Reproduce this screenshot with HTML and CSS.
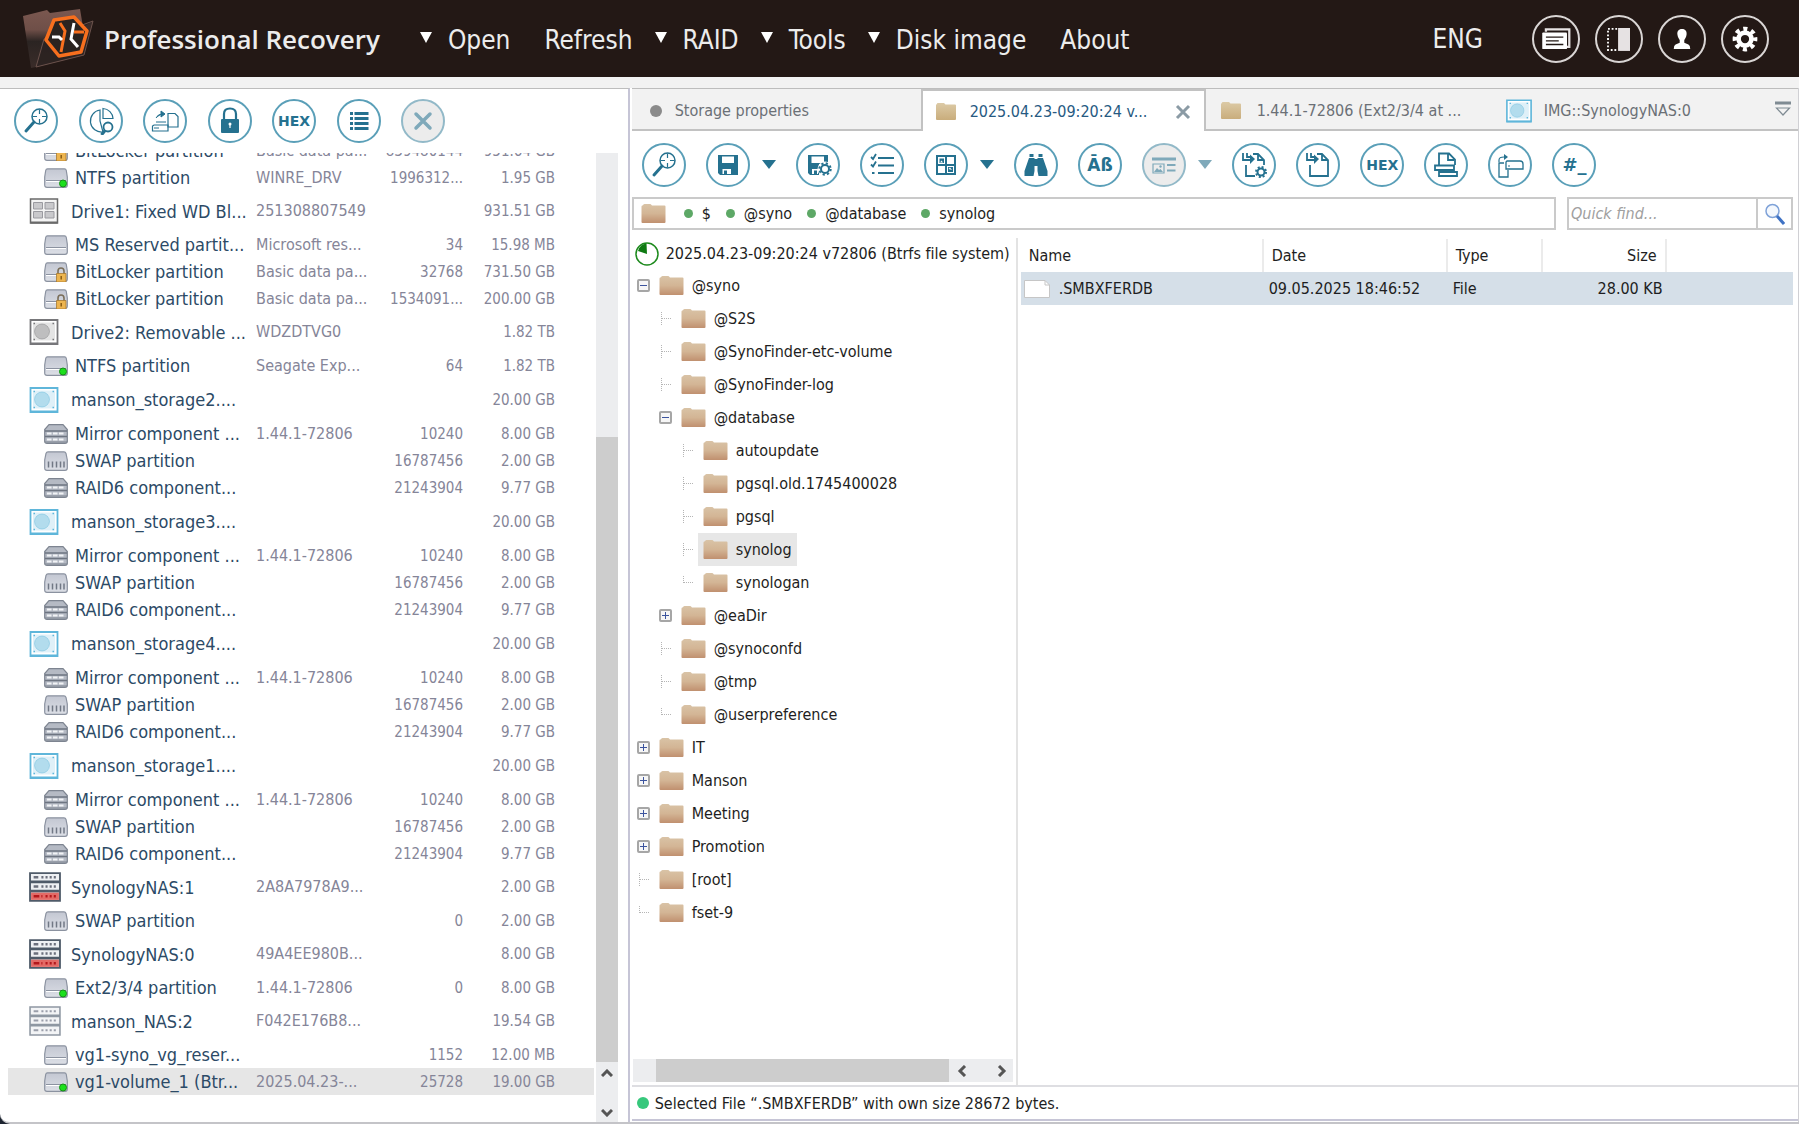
FILE: index.html
```html
<!DOCTYPE html>
<html lang="en">
<head>
    <meta charset="UTF-8">
    <meta name="viewport" content="width=device-width, initial-scale=1.0">
    <title>Professional Recovery</title>
    <link rel="stylesheet" href="styles.css">
</head>
<body>

<!-- Shared icons -->
<svg class="sprite" aria-hidden="true">
    <defs>
        <linearGradient id="folder-fill" x1="0" y1="0" x2="0" y2="1">
            <stop offset="0" stop-color="#d9c3a6"/>
            <stop offset="0.5" stop-color="#d3b595"/>
            <stop offset="1" stop-color="#c0906f"/>
        </linearGradient>
        <linearGradient id="tab-fill" x1="0" y1="0" x2="0" y2="1">
            <stop offset="0" stop-color="#dccaa6"/>
            <stop offset="1" stop-color="#c9ad7c"/>
        </linearGradient>
        <linearGradient id="part-fill" x1="0" y1="0" x2="0" y2="1">
            <stop offset="0" stop-color="#c3c7d2"/>
            <stop offset="1" stop-color="#dcdfe6"/>
        </linearGradient>
        <linearGradient id="logo-fill" x1="0" y1="0" x2="0" y2="1">
            <stop offset="0" stop-color="#7b5850"/>
            <stop offset="0.35" stop-color="#6f4f48"/>
            <stop offset="0.55" stop-color="#2b2422"/>
            <stop offset="1" stop-color="#3a2c29"/>
        </linearGradient>
    </defs>
    <symbol id="i-folder" viewBox="0 0 24 19">
        <path d="M0 2.5Q0 1.5 1 1.5L2 .5Q2.400 0 3 0H8.500Q9.500 0 10 1L10.500 1.500H23Q24 1.500 24 2.500V18Q24 19 23 19H1Q0 19 0 18Z" fill="url(#folder-fill)"/>
    </symbol>
    <symbol id="i-tabfolder" viewBox="0 0 20 17">
        <path d="M0 2L1.500 0H8L9.500 1.500H19Q20 1.500 20 2.500V16Q20 17 19 17H1Q0 17 0 16Z" fill="url(#tab-fill)"/>
    </symbol>
    <symbol id="i-search" viewBox="0 0 28 28">
        <circle cx="17.500" cy="9.500" r="7.500" fill="none" stroke="currentColor" stroke-width="1.500"/>
        <path d="M17.500 2.500v4.500M17.500 12v4.500M10.500 9.500H15M20 9.500h4.500" stroke="currentColor" stroke-width="1.200"/>
        <path d="M12 15L4 24" stroke="currentColor" stroke-width="3" stroke-linecap="round"/>
    </symbol>
    <symbol id="i-pie" viewBox="0 0 28 28">
        <path d="M13 3A11 11 0 1 0 16 25L13 14Z" fill="none" stroke="currentColor" stroke-width="1.200"/>
        <path d="M16 1.500V11.500H26A10.500 10.500 0 0 0 16 1.500Z" fill="none" stroke="currentColor" stroke-width="1.200"/>
        <circle cx="21" cy="20" r="4.500" fill="#fff" stroke="currentColor" stroke-width="1.800"/>
        <path d="M18 23.500L14.500 28" stroke="currentColor" stroke-width="3"/>
    </symbol>
    <symbol id="i-transfer" viewBox="0 0 28 28">
        <path d="M5 11Q7 7 11 7M10 4L14 7L10 10Z" fill="currentColor" stroke="currentColor" stroke-width="1"/>
        <path d="M17 6.500H24L27 9.500V20H17Z" fill="none" stroke="currentColor" stroke-width="1.200"/>
        <path d="M5 15H15M3 18H17V24H1.500V19Z" fill="none" stroke="currentColor" stroke-width="1.200"/>
        <path d="M3 21H8" stroke="currentColor"/>
    </symbol>
    <symbol id="i-lock" viewBox="0 0 28 28">
        <path d="M8 13V7Q8 1.500 14 1.500T20 7V13" fill="none" stroke="currentColor" stroke-width="2.200"/>
        <rect x="5" y="12" width="18" height="14" rx="1" fill="currentColor"/>
        <circle cx="14" cy="17" r="1.500" fill="#fff"/><path d="M14 17V21" stroke="#fff" stroke-width="1.200"/>
    </symbol>
    <symbol id="i-lines" viewBox="0 0 28 28">
        <path d="M5 6.500H8M5 11.500H8M5 16.500H8M5 21.500H8M9.500 6.500H23.500M9.500 11.500H23.500M9.500 16.500H23.500M9.500 21.500H23.500" stroke="currentColor" stroke-width="3"/>
    </symbol>
    <symbol id="i-close" viewBox="0 0 28 28">
        <path d="M7 7L21 21M21 7L7 21" stroke="currentColor" stroke-width="3.500" stroke-linecap="round"/>
    </symbol>
    <symbol id="i-save" viewBox="0 0 28 28">
        <path d="M4 4H24V24H6L4 22Z" fill="currentColor"/>
        <path d="M8 5.500H20V12H8ZM8.500 18H17V23H8.500Z" fill="#fff"/>
        <path d="M10 19.500H13V23H10Z" fill="currentColor"/>
    </symbol>
    <symbol id="i-savegear" viewBox="0 0 28 28">
        <path d="M4 4H24V13H15V24H6L4 22Z" fill="currentColor"/>
        <path d="M7.500 5.500H20V12H7.500ZM8 18H14V23H8Z" fill="#fff"/>
        <path d="M10 19.500H13V23H10Z" fill="currentColor"/>
        <circle cx="21" cy="18" r="7.500" fill="#fff"/>
        <circle cx="21" cy="18" r="4" fill="none" stroke="currentColor" stroke-width="2"/>
        <circle cx="21" cy="18" r="5.700" fill="none" stroke="currentColor" stroke-width="2" stroke-dasharray="2.200 2.280"/>
    </symbol>
    <symbol id="i-checks" viewBox="0 0 28 28">
        <path d="M10 7H26M10 14.500H26M10 22H26" stroke="currentColor" stroke-width="2"/>
        <path d="M3 6L5 8L8 3M3 13.500L5 15.500L8 10.500M4 22H6.500" fill="none" stroke="currentColor" stroke-width="1.800"/>
    </symbol>
    <symbol id="i-grid" viewBox="0 0 28 28">
        <path d="M5 5H23V23H5ZM14 5V23M5 14H23" fill="none" stroke="currentColor" stroke-width="2"/>
        <path d="M7.500 7.500H12V12H7.500ZM16 16H21V21H16Z" fill="currentColor"/>
        <path d="M8 11.500L9.500 9.500L11 11.500ZM16.500 18L18 16.500L20 19Z" fill="#fff"/>
    </symbol>
    <symbol id="i-binoc" viewBox="0 0 28 28">
        <path d="M7.500 3H11.500V6H7.500ZM16.500 3H20.500V6H16.500Z" fill="currentColor"/>
        <path d="M7 7H12.500V20L11.500 25H2.500V20ZM15.500 7H21L25.500 20V25H16.500L15.500 20ZM12.500 8H15.500V15H12.500Z" fill="currentColor"/>
    </symbol>
    <symbol id="i-card" viewBox="0 0 28 28">
        <path d="M2 8H26" stroke="currentColor" stroke-width="3"/>
        <path d="M3 13H14V22H3Z" fill="none" stroke="currentColor" stroke-width="1.200"/>
        <path d="M4 21L7 17L9 19L10.500 18L13 21Z" fill="currentColor"/>
        <circle cx="10.500" cy="15.500" r="1.200" fill="currentColor"/>
        <path d="M17 14H25.500M17 19.500H25.500" stroke="currentColor" stroke-width="2"/>
    </symbol>
    <symbol id="i-import" viewBox="0 0 28 28">
        <path d="M6 14V25H24V9L18 3H13M18 3V9H24" fill="none" stroke="currentColor" stroke-width="1.800"/>
        <path d="M3 2V9H11M7 2V6H11" fill="none" stroke="currentColor" stroke-width="1.800"/>
        <path d="M10 3.500L15 8L10 13Z" fill="currentColor"/>
    </symbol>
    <symbol id="i-importgear" viewBox="0 0 28 28">
        <path d="M6 14V25H15M24 14V9L18 3H13M18 3V9H24" fill="none" stroke="currentColor" stroke-width="1.800"/>
        <path d="M3 2V9H11M7 2V6H11" fill="none" stroke="currentColor" stroke-width="1.800"/>
        <path d="M10 3.500L15 8L10 13Z" fill="currentColor"/>
        <circle cx="21" cy="21" r="3.500" fill="none" stroke="currentColor" stroke-width="2"/>
        <circle cx="21" cy="21" r="5" fill="none" stroke="currentColor" stroke-width="2" stroke-dasharray="2 1.927"/>
    </symbol>
    <symbol id="i-print" viewBox="0 0 28 28">
        <path d="M7 14V2.500H17L23 8.500V14M16 3V9H22" fill="none" stroke="currentColor" stroke-width="1.800"/>
        <path d="M3 14.500H22V19H3ZM7 21H25V25H7Z" fill="none" stroke="currentColor" stroke-width="1.800"/>
    </symbol>
    <symbol id="i-drivecopy" viewBox="0 0 28 28">
        <path d="M3 11V9Q3 6 8 6" fill="none" stroke="currentColor" stroke-width="1.200"/>
        <path d="M8 3L12 6L8 9Z" fill="currentColor"/>
        <path d="M11 10H24Q27 10 27 13V18H10V11ZM8 12H3V26H12V19" fill="none" stroke="currentColor" stroke-width="1.300"/>
        <path d="M12 15H14" stroke="currentColor"/>
    </symbol>
    <symbol id="i-hdd" viewBox="0 0 29 26">
        <path d="M1 1H28V25H1Z" fill="#fff" stroke="currentColor" stroke-width="1.800"/>
        <path d="M3.500 3.500H25.500V21.500H3.500Z" fill="currentColor" fill-opacity="0.200"/>
        <circle cx="12.500" cy="12.500" r="7.500" fill="currentColor" fill-opacity="0.350" stroke="currentColor" stroke-opacity="0.400"/>
        <path d="M4 4.500H5.500M23 4.500H24.500M4 20.500H5.500M23 20.500H24.500" stroke="currentColor" stroke-width="1.500"/>
        <path d="M1 24.500H28" stroke="currentColor" stroke-width="2"/>
    </symbol>
    <symbol id="i-fixed" viewBox="0 0 29 26">
        <path d="M1 1H28V25H1Z" fill="#f4f4f4" stroke="#6a6a6a" stroke-width="1.500"/>
        <path d="M4 4.500H13V11H4ZM15.500 4.500H24.500V11H15.500ZM4 13.500H13V20H4ZM15.500 13.500H24.500V20H15.500Z" fill="#c9c9cc" stroke="#9a9aa0"/>
        <path d="M1 24.500H28" stroke="#6a6a6a" stroke-width="2"/>
    </symbol>
    <symbol id="i-part" viewBox="0 0 24 20">
        <path d="M3.500 .8H20.500Q22 .8 22.300 2.500L23.300 9V17Q23.300 19.300 21 19.300H3Q.7 19.300 .7 17V9L1.700 2.500Q2 .8 3.500 .8Z" fill="url(#part-fill)" stroke="#8b92a0" stroke-width="1.200"/>
        <path d="M2 12.500H22" stroke="#8b92a0"/><path d="M2 13.500H22" stroke="#fff"/>
    </symbol>
    <symbol id="i-ntfs" viewBox="0 0 24 20">
        <use href="#i-part"/>
        <circle cx="19" cy="15.500" r="3.500" fill="#1ce01c" stroke="#169016" stroke-width="1"/>
    </symbol>
    <symbol id="i-bitlocker" viewBox="0 0 24 20">
        <use href="#i-part"/>
        <path d="M14 12V9Q14 6 17 6T20 9V12" fill="none" stroke="#7b6f5a" stroke-width="1.600"/>
        <path d="M12.500 11.500H22V20H12.500Z" fill="#edb550" stroke="#a87a30" stroke-width=".8"/>
        <path d="M17.200 14V17.500" stroke="#8a5c14" stroke-width="1.500"/>
    </symbol>
    <symbol id="i-swap" viewBox="0 0 24 20">
        <path d="M4 .8H20Q21.500 .8 22 2.500L23.300 9V17Q23.300 19.300 21 19.300H3Q.7 19.300 .7 17V9L2 2.500Q2.500 .8 4 .8Z" fill="url(#part-fill)" stroke="#8b92a0" stroke-width="1.200"/>
        <path d="M4.500 10.500V16.500M8.500 10.500V16.500M12.500 10.500V16.500M16.500 10.500V16.500M20 10.500V16.500" stroke="#717885" stroke-width="1.500"/>
    </symbol>
    <symbol id="i-raid" viewBox="0 0 24 20">
        <path d="M5 .7H19L23.300 5.500V17.500Q23.300 19.300 21 19.300H3Q.7 19.300 .7 17.500V5.500Z" fill="#b5bac4" stroke="#7d8490" stroke-width="1.200"/>
        <path d="M1 7H23M1 12.500H23" stroke="#6e7581" stroke-width="1.300"/>
        <path d="M3 9.500H21M3 15.500H21" stroke="#f2f3f6" stroke-width="2" stroke-dasharray="4.500 1.500"/>
        <path d="M1 18H23" stroke="#7d8490"/>
    </symbol>
    <symbol id="i-nas" viewBox="0 0 31 29">
        <path d="M1 1H30V9H1ZM1 10H30V18H1ZM1 19H30V28H1Z" fill="#f3f4f6" stroke="#8e97a2" stroke-width="1.500"/>
        <path d="M4.500 5H9M12 5H14M16 5H18M20 5H22M24 5H26M4.500 14H9M12 14H14M16 14H18M20 14H22M24 14H26M4.500 23.500H9M12 23.500H14M16 23.500H18M20 23.500H22M24 23.500H26" stroke="#9a9eaa" stroke-width="2"/>
    </symbol>
    <symbol id="i-nasred" viewBox="0 0 31 29">
        <path d="M1 1H30V9H1ZM1 10H30V18H1ZM1 19H30V28H1Z" fill="#eef0f3" stroke="#4f5b69" stroke-width="1.800"/>
        <path d="M4.500 5H9M12 5H14M16 5H18M20 5H22M24 5H26M4.500 14H9M12 14H14M16 14H18M20 14H22M24 14H26" stroke="#6b6f7c" stroke-width="2.500"/>
        <path d="M2 20H29V27H2Z" fill="#e36a66"/>
        <path d="M4.500 23.500H10M12 23.500H13M16 23.500H18M20 23.500H22M24 23.500H26" stroke="#b3181c" stroke-width="2.500"/>
    </symbol>
</svg>

<header class="topbar">
    <svg class="logo" viewBox="0 0 72 60" aria-hidden="true">
        <path d="M1 7L25 1L28 4L58 0L61 18L71 12L62 46L14 58L9 59Z" fill="url(#logo-fill)"/>
        <path d="M14 58L22 30L71 12L62 46Z" fill="#2b2220" fill-opacity="0.800" stroke="#6b524c"/>
        <path d="M32 11L52 8L65 22L59 43L37 47L24 31Z" fill="#2a2320" stroke="#f76f1e" stroke-width="3.500" stroke-linejoin="round"/>
        <path d="M38 14L43 22L39 43M52 23H62" fill="none" stroke="#f76f1e" stroke-width="3"/>
        <path d="M52 14L49 30L56 38M30 28H37L40 31" fill="none" stroke="#fff" stroke-width="3"/>
    </svg>
    <strong class="brand">Professional Recovery</strong>
    <nav class="menu">
        <a href="#" class="has-sub">Open</a>
        <a href="#">Refresh</a>
        <a href="#" class="has-sub">RAID</a>
        <a href="#" class="has-sub">Tools</a>
        <a href="#" class="has-sub">Disk image</a>
        <a href="#">About</a>
    </nav>
    <button class="lang">ENG</button>
    <div class="top-actions">
        <button class="top-btn" aria-label="News">
            <svg viewBox="0 0 48 48"><path d="M13 16V13.500H38.500V32.500H36" fill="none" stroke="#e8e4e4" stroke-width="2.500"/><rect x="9" y="17" width="27" height="18" rx="1" fill="#fff"/><path d="M13 22H32M13 26H27M13 30H32" stroke="#231815" stroke-width="1.500"/></svg>
        </button>
        <button class="top-btn" aria-label="Panels">
            <svg viewBox="0 0 48 48"><path d="M22 13H12V36H22" fill="none" stroke="#fff" stroke-width="2" stroke-dasharray="2 2"/><rect x="23" y="12" width="13" height="25" fill="#e6e2e3"/></svg>
        </button>
        <button class="top-btn" aria-label="Account">
            <svg viewBox="0 0 48 48"><path d="M24 13C28 13 29.500 16 29 19C28.700 22 27 24 26.500 25V28L31 30Q33 31 33 35H15Q15 31 17 30L21.500 28V25C21 24 19.300 22 19 19C18.500 16 20 13 24 13Z" fill="#fff"/></svg>
        </button>
        <button class="top-btn" aria-label="Settings">
            <svg viewBox="0 0 48 48"><circle cx="24" cy="24" r="7" fill="none" stroke="#fff" stroke-width="5"/><circle cx="24" cy="24" r="11" fill="none" stroke="#fff" stroke-width="5" stroke-dasharray="4.400 4.240" stroke-dashoffset="2.200"/></svg>
        </button>
    </div>
</header>

<main class="workspace">
    <section class="storages">
        <div class="toolbar storages-bar">
            <button class="tool" aria-label="Scan"><svg><use href="#i-search"/></svg></button>
            <button class="tool" aria-label="Find partitions"><svg><use href="#i-pie"/></svg></button>
            <button class="tool" aria-label="Save image"><svg><use href="#i-transfer"/></svg></button>
            <button class="tool" aria-label="Decrypt"><svg><use href="#i-lock"/></svg></button>
            <button class="tool hex">HEX</button>
            <button class="tool" aria-label="Properties"><svg><use href="#i-lines"/></svg></button>
            <button class="tool disabled" aria-label="Close storage" disabled><svg><use href="#i-close"/></svg></button>
        </div>
        <div class="drive-scroll">
            <div class="drive-view">
                <table class="drives">
                    <colgroup><col class="c-name"><col class="c-label"><col class="c-start"><col class="c-size"><col></colgroup>
                    <tbody id="drives"></tbody>
                </table>
            </div>
            <div class="vscroll">
                <div class="vthumb"></div>
                <svg viewBox="0 0 12 8"><path d="M1 7L6 2L11 7" fill="none" stroke="#555" stroke-width="3"/></svg>
                <svg viewBox="0 0 12 8"><path d="M1 1L6 6L11 1" fill="none" stroke="#555" stroke-width="3"/></svg>
            </div>
        </div>
    </section>

    <section class="explorer">
        <div class="tabs">
            <button class="tab tab-props"><span class="dot"></span>Storage properties</button>
            <button class="tab tab-active"><svg class="tab-folder"><use href="#i-tabfolder"/></svg>2025.04.23-09:20:24 v...
                <svg class="tab-close" viewBox="0 0 16 16"><path d="M2 2L14 14M14 2L2 14" stroke="#8b9ba5" stroke-width="3"/></svg>
            </button>
            <button class="tab tab-ext"><svg class="tab-folder"><use href="#i-tabfolder"/></svg>1.44.1-72806 (Ext2/3/4 at ...</button>
            <button class="tab tab-img"><svg class="tab-hdd"><use href="#i-hdd"/></svg>IMG::SynologyNAS:0</button>
            <button class="tab-more" aria-label="More tabs"><svg viewBox="0 0 16 16"><path d="M0 2H16" stroke="#7f8b93" stroke-width="3"/><path d="M1.500 7H14.500L8 14Z" fill="none" stroke="#7f8b93" stroke-width="1.200"/></svg></button>
        </div>

        <div class="toolbar explorer-bar">
            <button class="tool" aria-label="Search"><svg><use href="#i-search"/></svg></button>
            <div class="split"><button class="tool" aria-label="Save"><svg><use href="#i-save"/></svg></button><button class="caret" aria-label="Save options"></button></div>
            <button class="tool" aria-label="Save settings"><svg><use href="#i-savegear"/></svg></button>
            <button class="tool" aria-label="Select"><svg><use href="#i-checks"/></svg></button>
            <div class="split"><button class="tool" aria-label="View"><svg><use href="#i-grid"/></svg></button><button class="caret" aria-label="View options"></button></div>
            <button class="tool" aria-label="Find"><svg><use href="#i-binoc"/></svg></button>
            <button class="tool abc">Āß</button>
            <div class="split"><button class="tool disabled" aria-label="Preview" disabled><svg><use href="#i-card"/></svg></button><button class="caret faded" aria-label="Preview options"></button></div>
            <button class="tool" aria-label="Import with options"><svg><use href="#i-importgear"/></svg></button>
            <button class="tool" aria-label="Import"><svg><use href="#i-import"/></svg></button>
            <button class="tool hex">HEX</button>
            <button class="tool" aria-label="Report"><svg><use href="#i-print"/></svg></button>
            <button class="tool" aria-label="Copy to drive"><svg><use href="#i-drivecopy"/></svg></button>
            <button class="tool hash">#_</button>
        </div>

        <div class="address">
            <nav class="crumbs">
                <svg class="folder"><use href="#i-folder"/></svg>
                <a href="#">$</a>
                <a href="#">@syno</a>
                <a href="#">@database</a>
                <a href="#">synolog</a>
            </nav>
            <form class="quick">
                <input type="text" placeholder="Quick find..." aria-label="Quick find">
                <button type="button" aria-label="Find">
                    <svg viewBox="0 0 20 22"><circle cx="7.500" cy="8" r="6.500" fill="#f4f8fd" stroke="#7fa2d8" stroke-width="1.500"/><path d="M12 13L19 21" stroke="#3f72c4" stroke-width="3"/></svg>
                </button>
            </form>
        </div>

        <div class="panes">
            <div class="tree-pane">
                <div class="tree-root">
                    <svg viewBox="0 0 24 24"><circle cx="12" cy="12" r="11" fill="#fff" stroke="#1d8a1d" stroke-width="1.500"/><path d="M12 12L3 9Q5 2 11.500 1.500Z" fill="#0f7a12"/></svg>
                    <span>2025.04.23-09:20:24 v72806 (Btrfs file system)</span>
                </div>
                <ul class="tree" id="tree"></ul>
                <div class="hscroll">
                    <div class="hthumb"></div>
                    <svg viewBox="0 0 10 12"><path d="M8 1L3 6L8 11" fill="none" stroke="#555" stroke-width="3"/></svg>
                    <svg viewBox="0 0 10 12"><path d="M2 1L7 6L2 11" fill="none" stroke="#555" stroke-width="3"/></svg>
                </div>
            </div>
            <div class="files-pane">
                <table class="files">
                    <colgroup><col class="f-name"><col class="f-date"><col class="f-type"><col class="f-size"><col></colgroup>
                    <thead>
                        <tr><th>Name</th><th>Date</th><th>Type</th><th class="num">Size</th><th></th></tr>
                    </thead>
                    <tbody>
                        <tr>
                            <td><span class="file"><svg viewBox="0 0 26 18"><path d="M.5 .5H21L25.500 5V17.500H.5Z" fill="#fff" stroke="#c6c6c6"/><path d="M21 .5V5H25.500" fill="none" stroke="#c6c6c6"/></svg>.SMBXFERDB</span></td>
                            <td>09.05.2025 18:46:52</td>
                            <td>File</td>
                            <td class="num">28.00 KB</td>
                            <td></td>
                        </tr>
                    </tbody>
                </table>
            </div>
        </div>

        <footer class="status"><span class="status-dot"></span>Selected File “.SMBXFERDB” with own size 28672 bytes.</footer>
    </section>
</main>

<script src="script.js"></script>
</body>
</html>
```
FILE: styles.css
```css
* {
    box-sizing: border-box;
}

body {
    margin: 0;
    height: 100vh;
    display: flex;
    flex-direction: column;
    overflow: hidden;
    background: #1d2430;
    color: #1e1e22;
    font-family: "DejaVu Sans Condensed", Tahoma, "Noto Sans", sans-serif;
    font-size: 16px;
    font-variant-ligatures: none;
}

button {
    font: inherit;
    color: inherit;
    background: none;
    border: none;
    padding: 0;
}

a {
    color: inherit;
    text-decoration: none;
}

svg {
    display: block;
    flex: none;
}

table {
    border-collapse: collapse;
    table-layout: fixed;
    width: 100%;
}

.sprite {
    position: absolute;
    width: 0;
    height: 0;
}

/* Top bar */
.topbar {
    display: flex;
    align-items: center;
    flex: none;
    height: 77px;
    padding: 0 30px 0 22px;
    background: #231815;
    color: #ececec;
}

.logo {
    width: 72px;
    height: 60px;
}

.brand {
    margin-left: 10px;
    font-family: "Open Sans", sans-serif;
    font-size: 26px;
    font-weight: 600;
    white-space: nowrap;
}

.menu {
    display: flex;
    gap: 34px;
    margin-left: 68px;
    padding-top: 2px;
    font-size: 26px;
    white-space: nowrap;
}

.menu .has-sub {
    margin-left: -12px;
}

.menu .has-sub:first-child {
    margin-left: -28px;
}

.has-sub::before {
    content: "";
    display: inline-block;
    margin-right: 16px;
    vertical-align: 6px;
    border: 6px solid transparent;
    border-top: 11px solid #fff;
    border-bottom: 0;
}

.lang {
    margin-left: auto;
    font-size: 26px;
}

.top-actions {
    display: flex;
    gap: 15px;
    margin-left: 49px;
}

.top-btn {
    width: 48px;
    height: 48px;
    border: 2px solid #d9d5d4;
    border-radius: 50%;
}

.top-btn svg {
    width: 44px;
    height: 44px;
}

/* Workspace */
.workspace {
    flex: 1;
    display: flex;
    min-height: 0;
    border-top: 11px solid #f2f2f2;
    border-bottom: 2px solid #c4c4c8;
    border-bottom-left-radius: 10px;
    background: #fff;
}

.storages {
    display: flex;
    flex-direction: column;
    width: 35%;
    border-top: 1px solid #bdbdbd;
    border-right: 2px solid #c6c5d6;
}

.toolbar {
    display: flex;
    justify-content: space-between;
    align-items: center;
    flex: none;
}

.storages-bar {
    width: 431px;
    height: 64px;
    margin-left: 14px;
}

.tool {
    display: flex;
    align-items: center;
    justify-content: center;
    width: 44px;
    height: 44px;
    border: 2px solid #5a9fb8;
    border-radius: 50%;
    color: #25718f;
    font-family: "DejaVu Sans", sans-serif;
    font-weight: bold;
}

.tool svg {
    width: 28px;
    height: 28px;
}

.disabled {
    background: #ececec;
    border-color: #92b9c8;
    color: #7fa9ba;
}

.hex {
    font-size: 14px;
}

.abc {
    font-size: 17px;
}

.hash {
    font-size: 18px;
}

.drive-scroll {
    display: flex;
    flex: 1;
    min-height: 0;
}

.drive-view {
    flex: 1;
    overflow: hidden;
    padding: 0 2px 0 8px;
}

.drives {
    margin-top: -16px;
    color: #858598;
}

.c-name { width: 248px; }
.c-label { width: 123px; }
.c-start { width: 84px; }
.c-size { width: 92px; }

.drives td {
    height: 27px;
    padding: 0;
    line-height: 20px;
    white-space: nowrap;
}

.drives .drive td {
    height: 40px;
}

.drives .image td {
    height: 41px;
}

.drives .selected {
    background: #e6e6e6;
}

.drives .num {
    font-size: 15px;
    text-align: right;
}

.name {
    display: flex;
    align-items: center;
    gap: 7px;
    padding-left: 36px;
    color: #2c4a66;
    font-size: 18px;
    line-height: 27px;
}

.name svg {
    width: 24px;
    height: 20px;
}

.drive .name {
    gap: 12px;
    padding-left: 21px;
}

.drive .name svg {
    width: 30px;
    height: 26px;
    color: #77777a;
}

.image .name svg {
    color: #5fb6da;
}

.nas .name {
    gap: 10px;
}

.drive.nas .name svg {
    width: 32px;
    height: 30px;
}

.vscroll {
    display: flex;
    flex-direction: column;
    align-items: center;
    width: 22px;
    margin-right: 10px;
    padding-top: 284px;
    background: #ecedef;
}

.vthumb {
    flex: 1;
    width: 100%;
    background: #cdcdcd;
}

.vscroll svg {
    width: 12px;
    height: 8px;
    margin-top: 7px;
}

.vscroll svg:last-child {
    margin: 32px 0 5px;
}

/* Explorer */
.explorer {
    flex: 1;
    display: flex;
    flex-direction: column;
    min-width: 0;
    padding-left: 2px;
    border-right: 1px solid #d0d0d4;
}

.tabs {
    display: flex;
    flex: none;
    height: 43px;
    border-top: 1px solid #bdbdbd;
    background: #f2f2f2;
    color: #6b7076;
    white-space: nowrap;
}

.tab {
    display: flex;
    align-items: center;
    gap: 14px;
    padding-top: 3px;
    border-bottom: 2px solid #c2c2c2;
}

.tab svg.tab-folder {
    width: 20px;
    height: 17px;
}

.tab-props {
    gap: 13px;
    width: 289px;
    padding-left: 18px;
}

.dot {
    width: 12px;
    height: 12px;
    border-radius: 50%;
    background: #8b8b8b;
}

.tab-active {
    width: 285px;
    padding: 1px 13px 0;
    border: 2px solid #c2c2c2;
    border-bottom: none;
    background: #fff;
    color: #275a82;
}

.tab-close {
    width: 16px;
    height: 16px;
    margin-left: auto;
}

.tab-ext {
    width: 285px;
    gap: 16px;
    padding-left: 15px;
}

.tab-img {
    flex: 1;
    gap: 12px;
    padding-left: 15px;
}

.tab-hdd {
    width: 26px;
    height: 24px;
    color: #5fb6da;
}

.tab-more {
    padding-right: 7px;
    border-bottom: 2px solid #c2c2c2;
}

.tab-more svg {
    width: 16px;
    height: 16px;
}

.explorer-bar {
    width: 955px;
    height: 66px;
    margin-left: 10px;
    padding-top: 1px;
}

.split {
    display: flex;
    align-items: center;
}

.caret {
    margin-left: 12px;
    border: 7px solid transparent;
    border-top: 9px solid #25718f;
    border-bottom: 0;
}

.faded {
    border-top-color: #7fa9ba;
}

.address {
    display: flex;
    flex: none;
    gap: 11px;
    height: 33px;
    padding-right: 5px;
}

.crumbs {
    flex: 1;
    display: flex;
    align-items: center;
    gap: 15px;
    padding-left: 7px;
    border: 2px solid #cacaca;
}

.crumbs .folder {
    margin-right: 3px;
}

.crumbs a::before {
    content: "";
    display: inline-block;
    width: 9px;
    height: 9px;
    margin-right: 9px;
    border-radius: 50%;
    background: #5da866;
    vertical-align: 1px;
}

.folder {
    width: 25px;
    height: 19px;
}

.quick {
    display: flex;
    width: 226px;
    border: 2px solid #cacaca;
}

.quick input {
    flex: 1;
    min-width: 0;
    padding: 0 2px;
    border: none;
    font: italic 16px "DejaVu Sans Condensed", Tahoma, sans-serif;
}

.quick input::placeholder {
    color: #a0a0a0;
}

.quick button {
    width: 35px;
    padding-left: 7px;
    border-left: 2px solid #cacaca;
}

.quick svg {
    width: 20px;
    height: 22px;
}

.panes {
    flex: 1;
    display: flex;
    min-height: 0;
    margin-top: 8px;
}

.tree-pane {
    display: flex;
    flex-direction: column;
    width: 386px;
    border-right: 2px solid #e3e3e3;
}

.tree-root {
    display: flex;
    align-items: center;
    gap: 7px;
    height: 31px;
    padding-left: 3px;
    white-space: nowrap;
}

.tree-root svg {
    width: 24px;
    height: 24px;
}

.tree {
    flex: 1;
    margin: 0;
    padding: 0 0 0 5px;
    list-style: none;
}

.tree li {
    display: flex;
    align-items: center;
    height: 33px;
}

.tree .level-2 { padding-left: 22px; }
.tree .level-3 { padding-left: 44px; }

.box,
.branch {
    width: 13px;
    height: 13px;
    flex: none;
}

.box {
    border: 2px solid #a6a6a6;
    border-radius: 2px;
    background: #f6f6f6;
    color: #3c549e;
}

.box svg {
    width: 9px;
    height: 9px;
}

.item {
    display: flex;
    align-items: center;
    gap: 8px;
    height: 33px;
    margin-left: 4px;
    padding: 0 5px;
}

.item.selected {
    background: #e7e7e7;
}

.hscroll {
    display: flex;
    align-items: center;
    gap: 30px;
    height: 23px;
    margin: 0 3px 3px 1px;
    padding: 0 6px 0 23px;
    background: #ecedef;
}

.hthumb {
    flex: 1;
    height: 23px;
    margin-right: -22px;
    background: #cdcdcd;
}

.hscroll svg {
    width: 10px;
    height: 12px;
}

.files-pane {
    flex: 1;
    min-width: 0;
    padding: 1px 5px 0 3px;
}

.f-name { width: 242px; }
.f-date { width: 184px; }
.f-type { width: 95px; }
.f-size { width: 124px; }

.files th,
.files td {
    height: 33px;
    padding: 0 8px;
    text-align: left;
    font-weight: normal;
    white-space: nowrap;
}

.files th {
    border-right: 2px solid #ebebeb;
}

.files th:last-child {
    border-right: none;
}

.files td {
    padding: 0 3px 0 6px;
    background: #d5dfe8;
}

.files td:first-child {
    padding-left: 3px;
}

.files .num {
    text-align: right;
}

.file {
    display: flex;
    align-items: center;
    gap: 9px;
}

.file svg {
    width: 26px;
    height: 18px;
}

.status {
    display: flex;
    align-items: center;
    gap: 6px;
    flex: none;
    height: 36px;
    padding-left: 5px;
    border-top: 2px solid #dedee2;
    border-bottom: 2px solid #c6c5d6;
    margin-bottom: 1px;
}

.status-dot {
    width: 12px;
    height: 12px;
    border-radius: 50%;
    background: #37c87c;
}
```
FILE: script.js
```js
// [row class, icon, name, label, start sector, size]
const drives = [
    ['', 'bitlocker', 'BitLocker partition', 'Basic data pa...', '839480144', '951.64 GB'],
    ['', 'ntfs', 'NTFS partition', 'WINRE_DRV', '1996312...', '1.95 GB'],
    ['drive', 'fixed', 'Drive1: Fixed WD Bl...', '251308807549', '', '931.51 GB'],
    ['', 'part', 'MS Reserved partit...', 'Microsoft res...', '34', '15.98 MB'],
    ['', 'bitlocker', 'BitLocker partition', 'Basic data pa...', '32768', '731.50 GB'],
    ['', 'bitlocker', 'BitLocker partition', 'Basic data pa...', '1534091...', '200.00 GB'],
    ['drive', 'hdd', 'Drive2: Removable ...', 'WDZDTVG0', '', '1.82 TB'],
    ['', 'ntfs', 'NTFS partition', 'Seagate Exp...', '64', '1.82 TB']
];

[2, 3, 4, 1].forEach(n => {
    drives.push(
        ['drive image', 'hdd', `manson_storage${n}....`, '', '', '20.00 GB'],
        ['', 'raid', 'Mirror component ...', '1.44.1-72806', '10240', '8.00 GB'],
        ['', 'swap', 'SWAP partition', '', '16787456', '2.00 GB'],
        ['', 'raid', 'RAID6 component...', '', '21243904', '9.77 GB']
    );
});

drives.push(
    ['drive nas', 'nasred', 'SynologyNAS:1', '2A8A7978A9...', '', '2.00 GB'],
    ['', 'swap', 'SWAP partition', '', '0', '2.00 GB'],
    ['drive nas', 'nasred', 'SynologyNAS:0', '49A4EE980B...', '', '8.00 GB'],
    ['', 'ntfs', 'Ext2/3/4 partition', '1.44.1-72806', '0', '8.00 GB'],
    ['drive nas', 'nas', 'manson_NAS:2', 'F042E176B8...', '', '19.54 GB'],
    ['', 'part', 'vg1-syno_vg_reser...', '', '1152', '12.00 MB'],
    ['selected', 'ntfs', 'vg1-volume_1 (Btr...', '2025.04.23-...', '25728', '19.00 GB']
);

document.getElementById('drives').innerHTML = drives.map(([cls, icon, name, label, start, size]) => `
    <tr class="${cls}">
        <td><div class="name"><svg><use href="#i-${icon}"/></svg>${name}</div></td>
        <td>${label}</td>
        <td class="num">${start}</td>
        <td class="num">${size}</td>
        <td></td>
    </tr>
`).join('');

// [level, marker, name]
const folders = [
    [1, 'minus', '@syno'],
    [2, 'branch', '@S2S'],
    [2, 'branch', '@SynoFinder-etc-volume'],
    [2, 'branch', '@SynoFinder-log'],
    [2, 'minus', '@database'],
    [3, 'branch', 'autoupdate'],
    [3, 'branch', 'pgsql.old.1745400028'],
    [3, 'branch', 'pgsql'],
    [3, 'branch', 'synolog'],
    [3, 'last', 'synologan'],
    [2, 'plus', '@eaDir'],
    [2, 'branch', '@synoconfd'],
    [2, 'branch', '@tmp'],
    [2, 'last', '@userpreference'],
    [1, 'plus', 'IT'],
    [1, 'plus', 'Manson'],
    [1, 'plus', 'Meeting'],
    [1, 'plus', 'Promotion'],
    [1, 'branch', '[root]'],
    [1, 'last', 'fset-9']
];

const markers = {
    minus: '<button class="box" aria-label="Collapse"><svg viewBox="0 0 9 9"><path d="M1 4.5H8" stroke="currentColor"/></svg></button>',
    plus: '<button class="box" aria-label="Expand"><svg viewBox="0 0 9 9"><path d="M1 4.5H8M4.5 1V8" stroke="currentColor"/></svg></button>',
    branch: '<svg class="branch" viewBox="0 0 13 13"><path d="M2.5 0V13M3 6.5H13" stroke="#b5b5b5" stroke-dasharray="1 1"/></svg>',
    last: '<svg class="branch" viewBox="0 0 13 13"><path d="M2.5 0V7M3 6.5H13" stroke="#b5b5b5" stroke-dasharray="1 1"/></svg>'
};

document.getElementById('tree').innerHTML = folders.map(([level, marker, name]) => `
    <li class="level-${level}">
        ${markers[marker]}
        <span class="item${name === 'synolog' ? ' selected' : ''}"><svg class="folder"><use href="#i-folder"/></svg>${name}</span>
    </li>
`).join('');
```
